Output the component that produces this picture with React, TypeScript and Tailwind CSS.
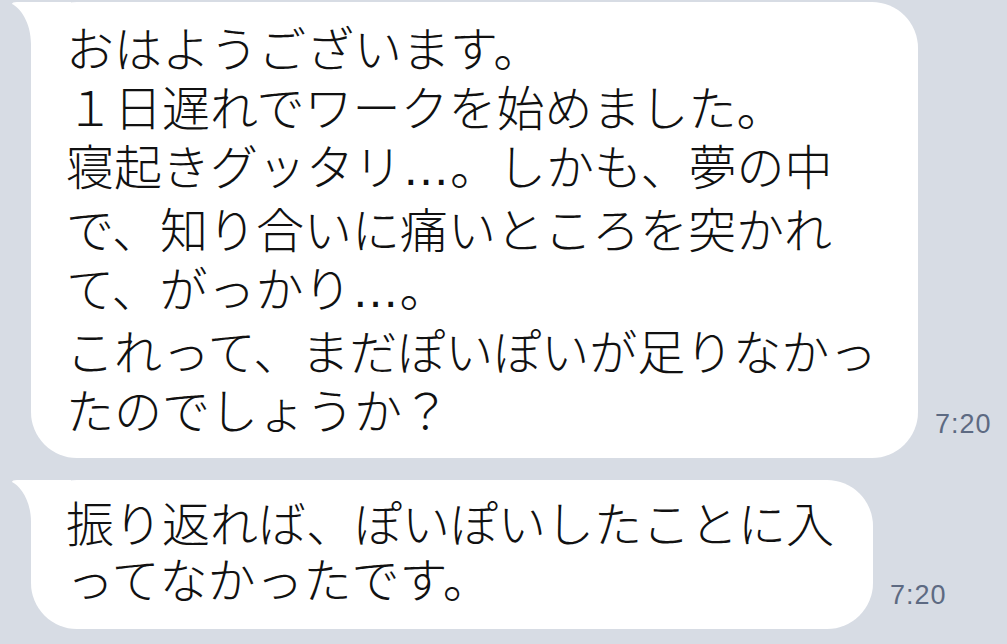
import type { ReactNode } from 'react';

// 吹き出しの左上のしっぽ
function Tail() {
  return (
    <svg
      className="absolute left-[-20px] top-0 w-[60px] h-[60px]"
      viewBox="0 0 60 60"
      fill="#ffffff"
    >
      <path d="M1 2 C9 6 20 20 20 42 L20 60 L60 60 L60 0 L6 0 Q1 0 1 2 Z" />
    </svg>
  );
}

function Dots() {
  return <span className="font-['Liberation_Sans',sans-serif]">…</span>;
}

function Bubble({
  children,
  width,
  time,
  leading,
}: {
  children: ReactNode;
  width: string;
  time: string;
  leading: string;
}) {
  return (
    <div className="flex items-end">
      <div className={`relative bg-white rounded-[46px] pl-[35px] ${width}`}>
        <Tail />
        <p
          className={`relative text-[48px] font-light text-[#111111] font-['Noto_Sans_CJK_JP',sans-serif] whitespace-nowrap ${leading}`}
        >
          {children}
        </p>
      </div>
      <span className="ml-[17px] mb-[20px] text-[27px] leading-none text-[#5d6a82] font-['Liberation_Sans',sans-serif] tracking-[1px]">
        {time}
      </span>
    </div>
  );
}

export default function App() {
  return (
    <div className="w-full h-[644px] overflow-hidden bg-[#d7dce4] pt-[2px] pl-[31px] flex flex-col gap-[22px]">
      <Bubble width="w-[887px]" time="7:20" leading="leading-[59px] pt-[15px] pb-[20px]">
        おはようございます。
        <br />
        １日遅れでワークを始めました。
        <br />
        寝起きグッタリ<Dots />。しかも、夢の中
        <br />
        で、知り合いに痛いところを突かれ
        <br />
        て、がっかり<Dots />。
        <br />
        これって、まだぽいぽいが足りなかっ
        <br />
        たのでしょうか？
      </Bubble>
      <Bubble width="w-[842px]" time="7:20" leading="leading-[56px] pt-[13px] pb-[24px]">
        振り返れば、ぽいぽいしたことに入
        <br />
        ってなかったです。
      </Bubble>
    </div>
  );
}
